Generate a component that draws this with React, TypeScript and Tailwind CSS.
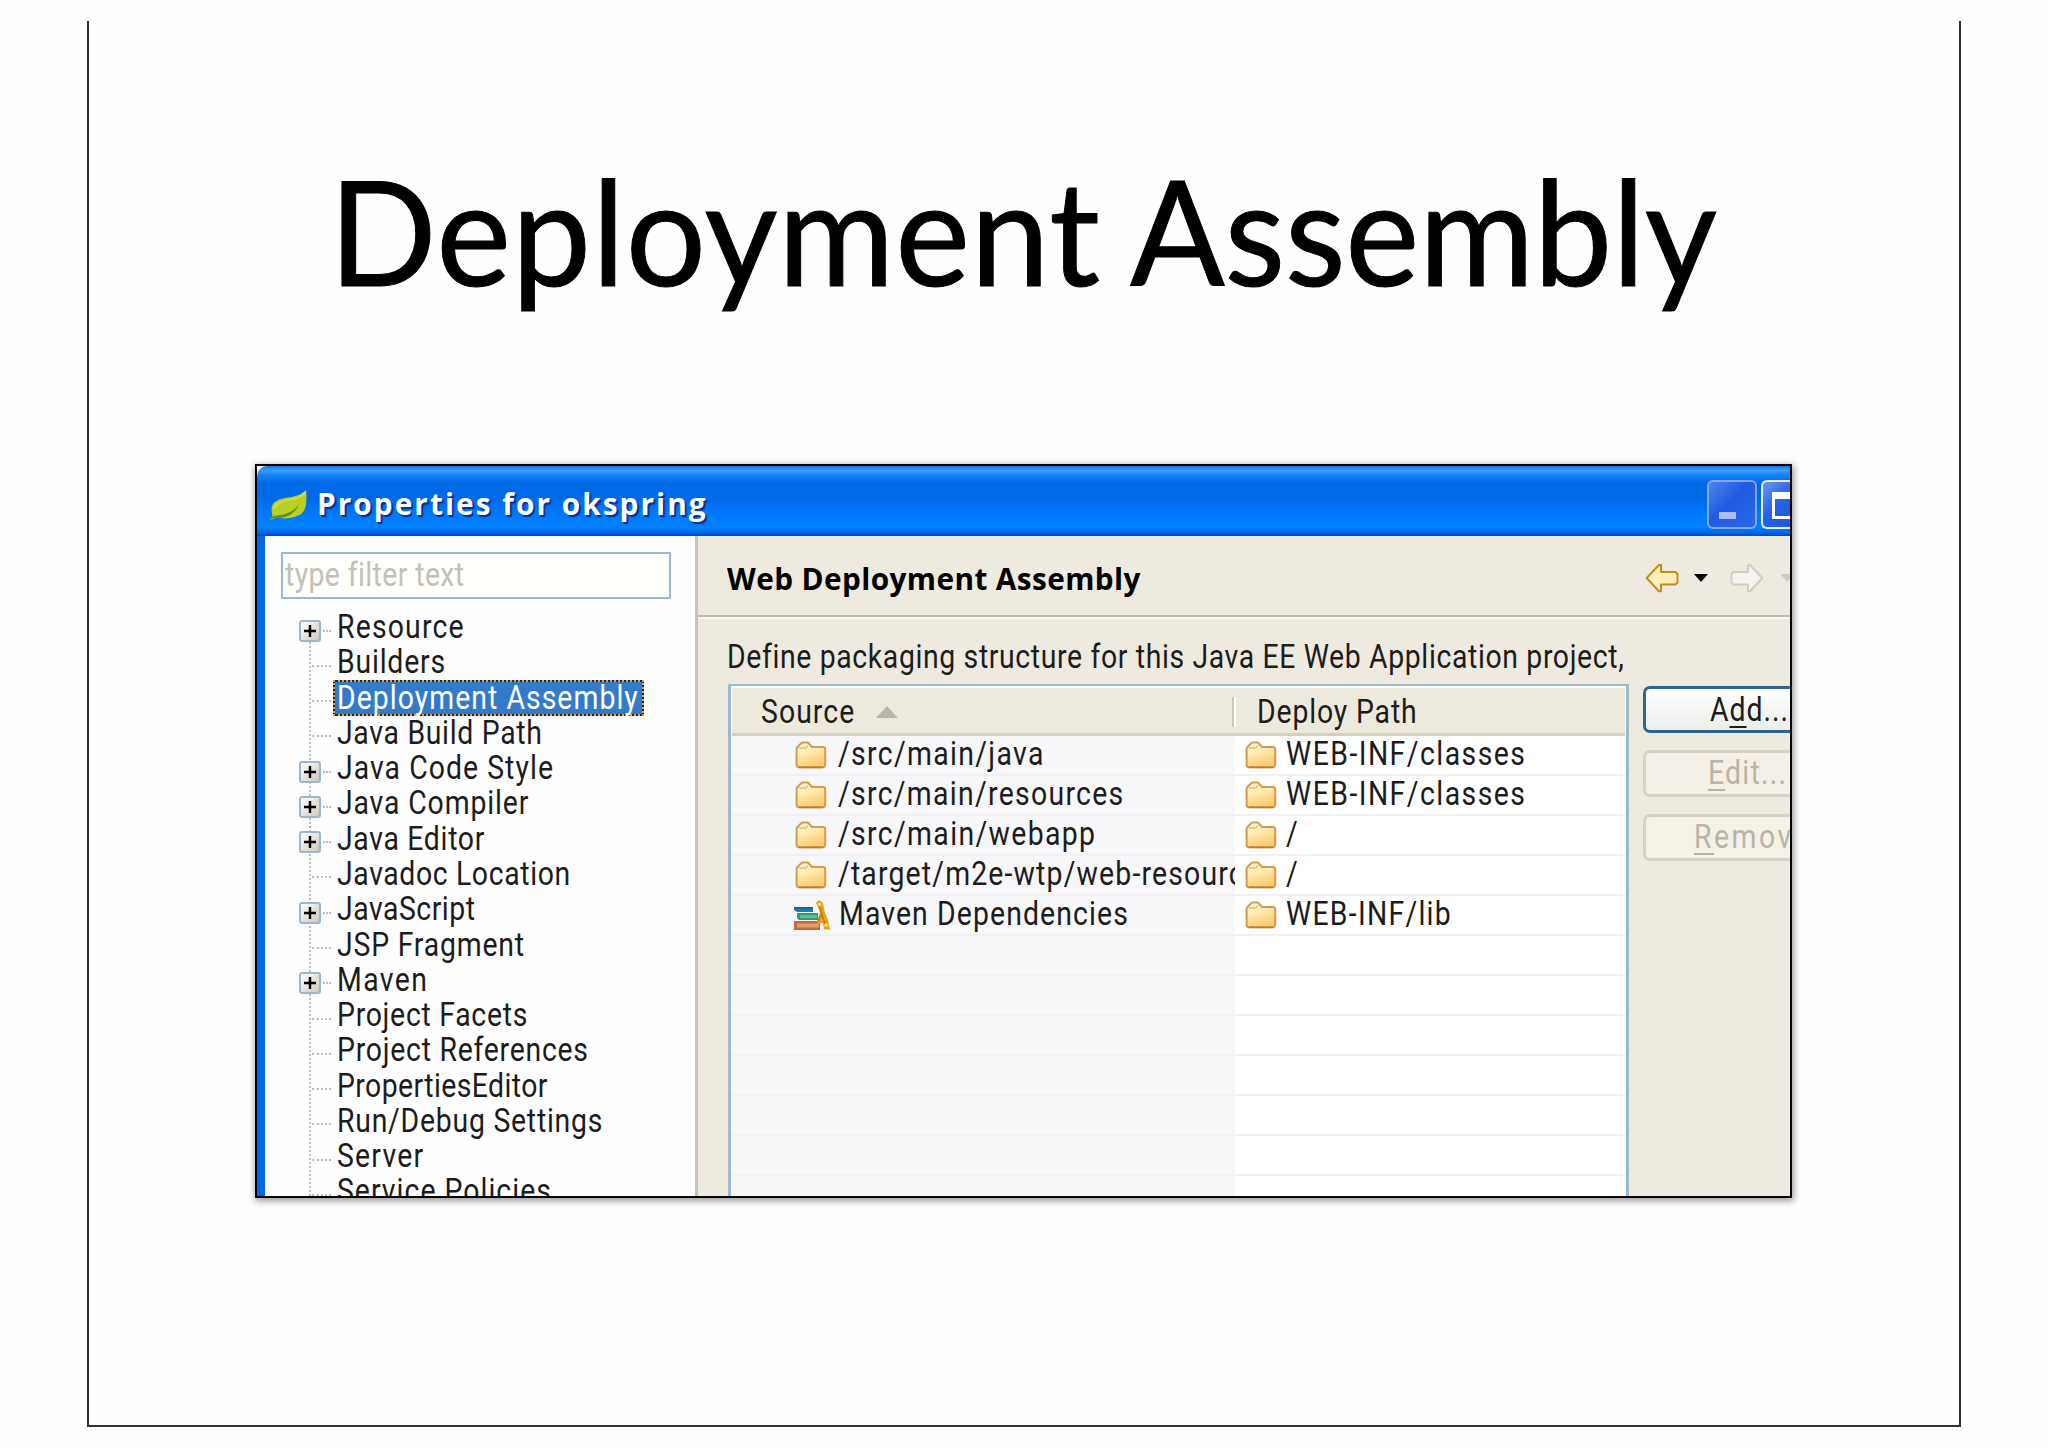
import { useLayoutEffect, useRef, useState } from 'react';
import type { ReactNode } from 'react';

interface FitProps {
  width: number;
  squeeze?: number;
  className?: string;
  children: ReactNode;
}

// Keeps a label at a set width: narrows the glyphs, then spreads what is left between them
function Fit({ width, squeeze = 0.86, className = '', children }: FitProps) {
  const ref = useRef<HTMLSpanElement>(null);
  const [spacing, setSpacing] = useState(0);

  useLayoutEffect(() => {
    const el = ref.current;
    if (!el) return;
    const count = (el.textContent ?? '').length;
    setSpacing((width / squeeze - el.offsetWidth) / Math.max(count - 1, 1));
  }, [width, squeeze]);

  return (
    <span className={`block shrink-0 whitespace-pre ${className}`} style={{ width }}>
      <span
        ref={ref}
        className="inline-block origin-left"
        style={{ letterSpacing: spacing, transform: `scaleX(${squeeze})` }}
      >
        {children}
      </span>
    </span>
  );
}

const treeItems = [
  { label: 'Resource', width: 127, expandable: true },
  { label: 'Builders', width: 108 },
  { label: 'Deployment Assembly', width: 301, selected: true },
  { label: 'Java Build Path', width: 205 },
  { label: 'Java Code Style', width: 216, expandable: true },
  { label: 'Java Compiler', width: 191, expandable: true },
  { label: 'Java Editor', width: 147, expandable: true },
  { label: 'Javadoc Location', width: 233 },
  { label: 'JavaScript', width: 138, expandable: true },
  { label: 'JSP Fragment', width: 187 },
  { label: 'Maven', width: 90, expandable: true },
  { label: 'Project Facets', width: 190 },
  { label: 'Project References', width: 251 },
  { label: 'PropertiesEditor', width: 210 },
  { label: 'Run/Debug Settings', width: 265 },
  { label: 'Server', width: 86 },
  { label: 'Service Policies', width: 214 },
];

const mappings = [
  { source: '/src/main/java', width: 205, path: 'WEB-INF/classes', pathWidth: 239 },
  { source: '/src/main/resources', width: 285, path: 'WEB-INF/classes', pathWidth: 239 },
  { source: '/src/main/webapp', width: 257, path: '/', pathWidth: 15 },
  { source: '/target/m2e-wtp/web-resources', width: 438, path: '/', pathWidth: 15 },
  { source: 'Maven Dependencies', width: 289, path: 'WEB-INF/lib', pathWidth: 165, library: true },
];

const emptyRows = [0, 1, 2, 3, 4, 5, 6];

function Leaf() {
  return (
    <svg viewBox="0 0 38 30" className="h-[30px] w-[38px] shrink-0">
      <path d="M0 29C3 28 4 26 3 23C1 14 6 10 16 8C26 7 32 5 37 0C38 8 38 20 32 24C26 28 14 30 7 27C5 29 3 30 0 29Z" fill="#b9cf22" />
      <path d="M1 29C3 25 6 26 11 25C20 24 28 19 30 13C28 22 20 27 11 28C7 28 5 27 3 29Z" fill="#5f8f1c" />
      <path d="M5 19C6 13 14 11 20 10C28 9 33 6 36 3" fill="none" stroke="#cfdb4a" strokeWidth="2" />
    </svg>
  );
}

function Folder() {
  return (
    <svg viewBox="0 0 32 28" className="h-7 w-8 shrink-0">
      <defs>
        <linearGradient id="folder" x1="0" y1="0" x2="0.4" y2="1">
          <stop offset="0" stopColor="#fffbe6" />
          <stop offset="0.5" stopColor="#ffe9ae" />
          <stop offset="1" stopColor="#fbcb70" />
        </linearGradient>
      </defs>
      <path
        d="M1.6 7L5 3.4L7 1.6H13L17 6H28Q30.2 6 30.2 8.5V23.5Q30.2 26.2 27.5 26.2H4Q1.6 26.2 1.6 23.5Z"
        fill="url(#folder)"
        stroke="#d59a4c"
        strokeWidth="2"
        strokeLinejoin="round"
      />
      <path d="M4 7H11L13 4.5" fill="none" stroke="#e9bd74" strokeWidth="1.4" />
      <path d="M4 26.4H28" stroke="#b97a35" strokeWidth="1.6" />
    </svg>
  );
}

function Books() {
  return (
    <svg viewBox="0 0 36 30" className="h-[30px] w-9 shrink-0">
      <path d="M0 7H19V12H3L0 10Z" fill="#1b7fb0" />
      <path d="M0 7H19V8.6H0Z" fill="#125f92" />
      <path d="M3 13H24V20H5L3 18Z" fill="#2f9d72" />
      <path d="M6 15H23V18H6Z" fill="#69bd8c" />
      <path d="M0 21H26V30H0Z" fill="#c4693c" />
      <path d="M3 23.5H25V27.5H3Z" fill="#e39a6c" />
      <path d="M22 3L25 0L29 3L31 13L34 20L36 29.5H30L29 23H23L26 12Z" fill="#eaa41c" />
      <path d="M25 4L29 18L32 26M24 21L28 14" stroke="#c67d0c" strokeWidth="1.6" fill="none" />
      <circle cx="25.5" cy="4.5" r="1.8" fill="#ffdf62" />
      <circle cx="32" cy="25" r="1.8" fill="#ffdf62" />
    </svg>
  );
}

function NavArrow({ muted = false }: { muted?: boolean }) {
  return (
    <svg viewBox="0 0 34 30" className={`h-[30px] w-[34px] shrink-0 ${muted ? '-scale-x-100' : ''}`}>
      <path
        d="M1.6 15L14 2H16V9H30.5L32.5 11V19.5L30.5 21.5H16V28.3H14Z"
        fill={muted ? '#f4f3ef' : '#fff0b8'}
        stroke={muted ? '#cfcdc6' : '#c28e1b'}
        strokeWidth="2"
        strokeLinejoin="round"
      />
    </svg>
  );
}

function Expander() {
  return (
    <span className="z-10 flex h-[22px] w-[22px] items-center justify-center rounded-[3px] border-2 border-[#9db6cf] bg-linear-to-br from-white to-[#cdc8bd]">
      <svg viewBox="0 0 12 12" className="h-3 w-3">
        <path d="M6 0V12M0 6H12" stroke="#000" strokeWidth="2.4" />
      </svg>
    </span>
  );
}

function TitleBar() {
  return (
    <div className="flex h-[70px] shrink-0 items-start rounded-tl-[10px] bg-[linear-gradient(180deg,#1470e8_0%,#3c9dff_6%,#1a84f8_12%,#0069e6_24%,#0069e8_46%,#0079fb_68%,#0080ff_88%,#0068e6_95%,#0048c4_100%)] pl-3">
      <div className="pt-6">
        <Leaf />
      </div>
      <Fit
        width={389}
        squeeze={0.96}
        className="ml-[10px] mt-4 font-['Open_Sans',sans-serif] text-[31px] font-bold leading-[42px] text-white [text-shadow:2px_2px_1px_#0a2f95]"
      >
        Properties for okspring
      </Fit>
      <div className="ml-auto flex shrink-0 gap-1 pt-[14px]">
        <div className="flex h-[49px] w-[50px] items-end rounded-[6px] border-2 border-[#83a8f2] bg-[linear-gradient(135deg,#4b85ee,#1f5be0_45%,#2a68ec)] pb-2 pl-2.5">
          <span className="h-[7px] w-[17px] bg-[#a9bff5]" />
        </div>
        <div className="h-[49px] w-[29px] rounded-l-[6px] border-2 border-r-0 border-[#e3edff] bg-[linear-gradient(135deg,#6c98f2,#2a62e4_50%,#1c57dd)] pl-[9px] pt-[10px]">
          <div className="h-[27px] border-[3px] border-r-0 border-t-[7px] border-white" />
        </div>
      </div>
    </div>
  );
}

function Tree() {
  return (
    <div className="relative pt-[10px]">
      <div className="absolute left-[44px] top-8 h-[600px] w-0 border-l-2 border-dotted border-[#c0bfbd]" />
      {treeItems.map((item) => (
        <div key={item.label} className="flex h-[35.28px] items-center">
          <div className="flex w-[66px] shrink-0 items-center justify-end pt-2">
            {item.expandable && <Expander />}
            <span
              className={`h-0 border-t-2 border-dotted border-[#c0bfbd] ${item.expandable ? 'ml-[2px] w-2' : 'w-[19px]'}`}
            />
          </div>
          {item.selected ? (
            <div className="mt-[2px] ml-[2px] flex h-[36px] w-[311px] items-center border-2 border-[#1c2430] bg-[#337ac9] pl-[2px] outline-2 -outline-offset-2 outline-dotted outline-[#d9a352]">
              <Fit width={item.width} className="-mt-[2px] leading-[35px] text-white">
                {item.label}
              </Fit>
            </div>
          ) : (
            <Fit width={item.width} className="ml-[6px] leading-[35px]">
              {item.label}
            </Fit>
          )}
        </div>
      ))}
    </div>
  );
}

function Sidebar() {
  return (
    <div className="w-[430px] shrink-0 bg-[#fefefe] pt-4">
      <div className="ml-4 flex h-[47px] w-[390px] items-center border-2 border-[#9db7d0] bg-[#fffffc] pl-[2px]">
        <Fit width={178} className="-mt-[2px] leading-[42px] text-[#c3c0b6]">
          type filter text
        </Fit>
      </div>
      <Tree />
    </div>
  );
}

function MappingTable() {
  return (
    <div className="w-[901px] shrink-0 overflow-hidden border-x-[3px] border-t-2 border-[#9cbace] bg-white">
      <div className="mx-px mt-[2px] flex h-[48px] items-center border-b-[3px] border-[#d3d0c1] bg-[#edeadd] pt-[2px]">
        <Fit width={93} className="ml-[29px]">
          Source
        </Fit>
        <svg viewBox="0 0 22 12" className="ml-[22px] h-3 w-[22px]">
          <path d="M11 0L22 12H0Z" fill="#b9b6a9" />
        </svg>
        <div className="ml-auto h-[30px] w-[4px] border-l-2 border-r-2 border-l-[#cbc8b8] border-r-white" />
        <Fit width={160} className="ml-[21px] mr-[208px]">
          Deploy Path
        </Fit>
      </div>
      <div className="mx-px">
        {mappings.map((row) => (
          <div key={row.source} className="flex h-10">
            <div className="flex w-[503px] shrink-0 items-center overflow-hidden border-b-2 border-[#f1eff1] bg-[#f7f6f8]">
              {row.library ? (
                <div className="ml-[62px] mr-[9px]">
                  <Books />
                </div>
              ) : (
                <div className="ml-[63px] mr-[11px]">
                  <Folder />
                </div>
              )}
              <Fit width={row.width} className="-mt-[2px] leading-[38px]">
                {row.source}
              </Fit>
            </div>
            <div className="flex grow items-center border-b-2 border-[#f2f1f1] pl-[10px]">
              <Folder />
              <Fit width={row.pathWidth} className="-mt-[2px] ml-[9px] leading-[38px]">
                {row.path}
              </Fit>
            </div>
          </div>
        ))}
        {emptyRows.map((row) => (
          <div key={row} className="flex h-10">
            <div className="w-[503px] shrink-0 border-b-2 border-[#f3f1f3] bg-[#f7f6f8]" />
            <div className="grow border-b-2 border-[#f2f1f1]" />
          </div>
        ))}
      </div>
    </div>
  );
}

function Buttons() {
  return (
    <div className="ml-[14px] mt-[2px] flex w-[220px] shrink-0 flex-col gap-[17px]">
      <div className="h-[47px] rounded-[7px] border-[3px] border-[#2e6690] bg-linear-to-b from-white to-[#eceeea] pl-[64px]">
        <Fit width={78} className="leading-[41px]">
          A<u className="underline decoration-2 underline-offset-[5px]">d</u>d...
        </Fit>
      </div>
      <div className="h-[47px] rounded-[7px] border-[3px] border-[#d6d3c6] bg-[#f5f0e7] pl-[62px] text-[#b9b5a9]">
        <Fit width={78} className="leading-[40px]">
          <u className="underline decoration-2 underline-offset-[5px]">E</u>dit...
        </Fit>
      </div>
      <div className="h-[47px] rounded-[7px] border-[3px] border-[#d6d3c6] bg-[#f5f1e6] pl-[48px] text-[#b9b5a9]">
        <Fit width={115} className="leading-[40px]">
          <u className="underline decoration-2 underline-offset-[5px]">R</u>emove
        </Fit>
      </div>
    </div>
  );
}

function AssemblyPage() {
  return (
    <div className="flex min-w-0 grow flex-col border-l-[3px] border-[#c5c3bb] bg-[#eeeadf]">
      <div className="flex h-[81px] shrink-0 items-center border-b-2 border-[#bfbcb0] pl-[29px]">
        <Fit
          width={413}
          squeeze={0.96}
          className="mt-[5px] font-['Open_Sans',sans-serif] text-[31px] font-bold leading-[42px] text-black"
        >
          Web Deployment Assembly
        </Fit>
        <div className="ml-auto flex shrink-0 items-center pt-[4px]">
          <NavArrow />
          <svg viewBox="0 0 14 8" className="ml-[15px] mr-[22px] h-2 w-[14px]">
            <path d="M0 0H14L7 8Z" fill="#000" />
          </svg>
          <NavArrow muted />
          <svg viewBox="0 0 14 8" className="-mr-[4px] ml-4 h-2 w-[14px]">
            <path d="M0 0H14L7 8Z" fill="#cfccc2" />
          </svg>
        </div>
      </div>
      <div className="border-t-2 border-[#fbfaf6] pl-[29px] pt-[17px]">
        <Fit width={896} className="leading-[42px]">
          Define packaging structure for this Java EE Web Application project,
        </Fit>
      </div>
      <div className="mt-[6px] flex min-h-0 grow pl-[30px]">
        <MappingTable />
        <Buttons />
      </div>
    </div>
  );
}

export default function App() {
  return (
    <div className="h-[1448px] w-[2048px] overflow-hidden bg-[#fefefe] px-[87px] pt-[21px]">
      <div className="h-[1406px] w-[1874px] border-2 border-t-0 border-[#333] pl-[166px]">
        <h1 className="flex h-[443px] pl-[74px] pt-[109px] font-['Lato',sans-serif] text-[146px] leading-[200px] text-black [-webkit-text-stroke:1px_#000]">
          <Fit width={771} squeeze={0.97}>
            Deployment
          </Fit>
          <Fit width={587} squeeze={0.96} className="ml-[30px]">
            Assembly
          </Fit>
        </h1>
        <div className="flex h-[734px] w-[1537px] flex-col overflow-hidden border-2 border-black bg-white font-['Roboto',sans-serif] text-[33px] leading-[40px] text-[#1c1c1c] shadow-[1px_2px_7px_1px_rgba(0,0,0,0.4)]">
          <TitleBar />
          <div className="flex min-h-0 grow border-l-8 border-[#0068e8]">
            <Sidebar />
            <AssemblyPage />
          </div>
        </div>
      </div>
    </div>
  );
}
